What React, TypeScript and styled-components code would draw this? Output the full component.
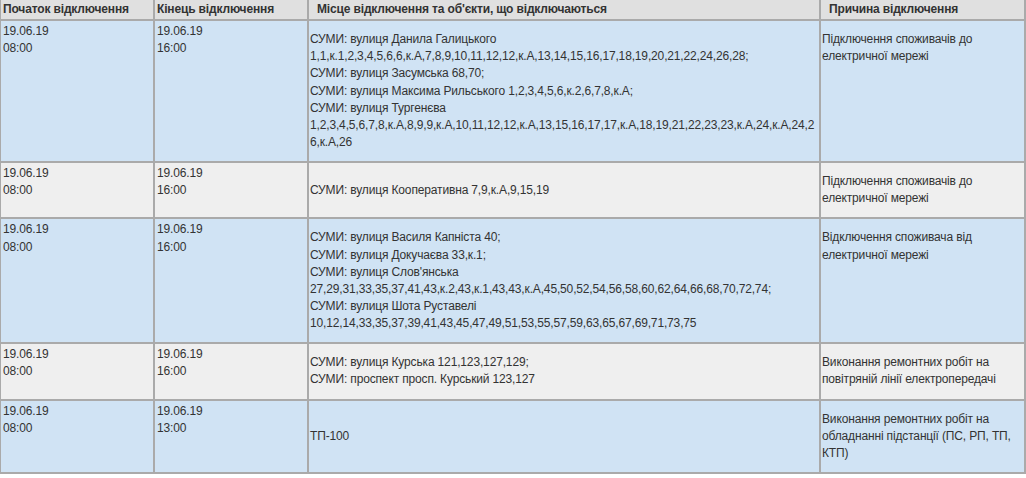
import React from "react";
import styled, { createGlobalStyle } from "styled-components";

const Global = createGlobalStyle`
  html, body { margin: 0; padding: 0; background: #ffffff; }
  body { font-family: "Liberation Sans", Arial, sans-serif; font-size: 12px; color: #333333; }
`;

const Table = styled.table`
  width: 1026px;
  table-layout: fixed;
  border-collapse: separate;
  border-spacing: 0;
  border-right: 1px solid #aaaaaa;
  border-bottom: 1px solid #aaaaaa;
  font-size: 12px;
  line-height: 17.14px;
  letter-spacing: -0.15px;
  color: #333333;
`;

const HeadCell = styled.th<{ $w: number; $pad: number }>`
  box-sizing: border-box;
  width: ${(p) => p.$w}px;
  background: #e0e0e0;
  border: 1px solid #aaaaaa;
  border-top: none;
  padding: 1px 2px 1px ${(p) => p.$pad}px;
  text-align: left;
  font-weight: bold;
  vertical-align: middle;
  white-space: nowrap;
`;

const Row = styled.tr<{ $tone: "blue" | "gray" }>`
  background: ${(p) => (p.$tone === "blue" ? "#d0e3f4" : "#efefef")};
`;

const DateCell = styled.td`
  border: 1px solid #aaaaaa;
  padding: 2px 2px;
  vertical-align: top;
`;

const PlaceCell = styled.td`
  border: 1px solid #aaaaaa;
  padding: 10px 2px 10px 1px;
  vertical-align: middle;
`;

const ReasonCell = styled.td`
  border: 1px solid #aaaaaa;
  padding: 10px 2px 10px 1px;
  vertical-align: top;
`;

const Line = styled.span`
  display: block;
  white-space: nowrap;
`;

type Item = {
  tone: "blue" | "gray";
  start: [string, string];
  end: [string, string];
  place: string[];
  reason: string[];
};

const rows: Item[] = [
  {
    tone: "blue",
    start: ["19.06.19", "08:00"],
    end: ["19.06.19", "16:00"],
    place: [
      "СУМИ: вулиця Данила Галицького",
      "1,1,к.1,2,3,4,5,6,6,к.А,7,8,9,10,11,12,12,к.А,13,14,15,16,17,18,19,20,21,22,24,26,28;",
      "СУМИ: вулиця Засумська 68,70;",
      "СУМИ: вулиця Максима Рильського 1,2,3,4,5,6,к.2,6,7,8,к.А;",
      "СУМИ: вулиця Тургенєва",
      "1,2,3,4,5,6,7,8,к.А,8,9,9,к.А,10,11,12,12,к.А,13,15,16,17,17,к.А,18,19,21,22,23,23,к.А,24,к.А,24,2",
      "6,к.А,26",
    ],
    reason: ["Підключення споживачів до", "електричної мережі"],
  },
  {
    tone: "gray",
    start: ["19.06.19", "08:00"],
    end: ["19.06.19", "16:00"],
    place: ["СУМИ: вулиця Кооперативна 7,9,к.А,9,15,19"],
    reason: ["Підключення споживачів до", "електричної мережі"],
  },
  {
    tone: "blue",
    start: ["19.06.19", "08:00"],
    end: ["19.06.19", "16:00"],
    place: [
      "СУМИ: вулиця Василя Капніста 40;",
      "СУМИ: вулиця Докучаєва 33,к.1;",
      "СУМИ: вулиця Слов'янська",
      "27,29,31,33,35,37,41,43,к.2,43,к.1,43,43,к.А,45,50,52,54,56,58,60,62,64,66,68,70,72,74;",
      "СУМИ: вулиця Шота Руставелі",
      "10,12,14,33,35,37,39,41,43,45,47,49,51,53,55,57,59,63,65,67,69,71,73,75",
    ],
    reason: ["Відключення споживача від", "електричної мережі"],
  },
  {
    tone: "gray",
    start: ["19.06.19", "08:00"],
    end: ["19.06.19", "16:00"],
    place: ["СУМИ: вулиця Курська 121,123,127,129;", "СУМИ: проспект просп. Курський 123,127"],
    reason: ["Виконання ремонтних робіт на", "повітряній лінії електропередачі"],
  },
  {
    tone: "blue",
    start: ["19.06.19", "08:00"],
    end: ["19.06.19", "13:00"],
    place: ["ТП-100"],
    reason: ["Виконання ремонтних робіт на", "обладнанні підстанції (ПС, РП, ТП,", "КТП)"],
  },
];

const Lines = ({ items }: { items: string[] }) => (
  <>
    {items.map((t, i) => (
      <Line key={i}>{t}</Line>
    ))}
  </>
);

export default function App() {
  return (
    <>
      <Global />
      <Table>
        <thead>
          <tr>
            <HeadCell $w={154} $pad={2}>Початок відключення</HeadCell>
            <HeadCell $w={154} $pad={2}>Кінець відключення</HeadCell>
            <HeadCell $w={512} $pad={8}>Місце відключення та об'єкти, що відключаються</HeadCell>
            <HeadCell $w={205} $pad={8}>Причина відключення</HeadCell>
          </tr>
        </thead>
        <tbody>
          {rows.map((r, i) => (
            <Row key={i} $tone={r.tone}>
              <DateCell>
                <Lines items={r.start} />
              </DateCell>
              <DateCell>
                <Lines items={r.end} />
              </DateCell>
              <PlaceCell>
                <Lines items={r.place} />
              </PlaceCell>
              <ReasonCell>
                <Lines items={r.reason} />
              </ReasonCell>
            </Row>
          ))}
        </tbody>
      </Table>
    </>
  );
}
